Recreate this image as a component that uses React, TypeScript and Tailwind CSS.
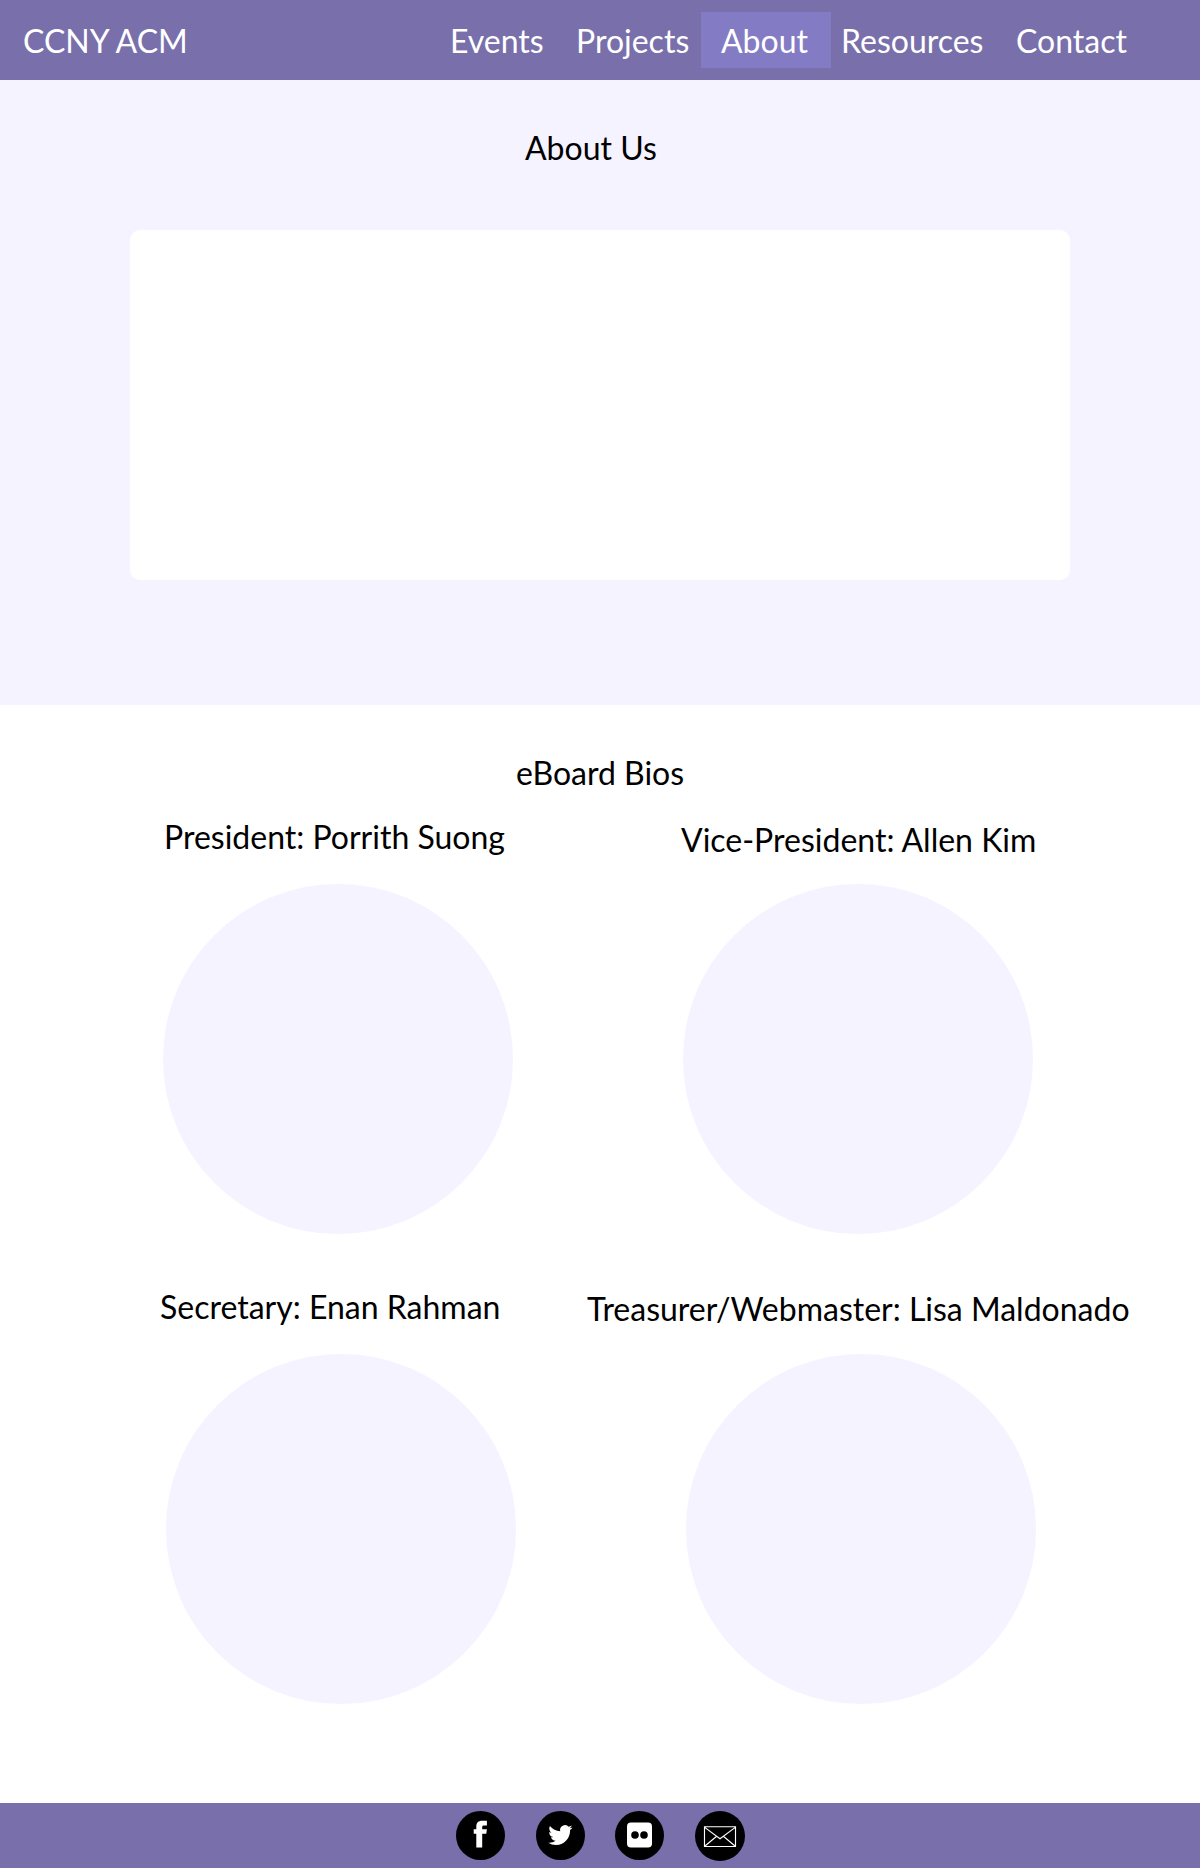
import type { ReactNode } from "react";

const navItems = [
  { label: "Events", box: "w-[126px]" },
  { label: "Projects", box: "w-[125px]" },
  { label: "About", box: "w-[130px] bg-[#847bc5] pl-5" },
  { label: "Resources", box: "w-[185px] pl-[10px]" },
  { label: "Contact", box: "w-[184px]" },
];

function Bio({ title, titleClass, circleClass }: { title: string; titleClass: string; circleClass: string }) {
  return (
    <article className="flex h-[470px] flex-col">
      <h3 className={`h-[67px] whitespace-nowrap ${titleClass}`}>{title}</h3>
      <div className={`size-[350px] shrink-0 rounded-full bg-[#f5f3ff] ${circleClass}`} />
    </article>
  );
}

function SocialLink({ label, className, children }: { label: string; className: string; children: ReactNode }) {
  return (
    <a href="#" aria-label={label} className={`block shrink-0 ${className}`}>
      <svg viewBox="0 0 49 49" className="size-full">
        {children}
      </svg>
    </a>
  );
}

export default function App() {
  return (
    <div className="flex h-[1868px] w-[1200px] flex-col bg-white font-['Lato',sans-serif] text-[32px] leading-10 text-black">
      <header className="flex h-20 shrink-0 items-center justify-between bg-[#786fab] pl-[23px] text-white">
        <div className="whitespace-nowrap pt-px">CCNY ACM</div>
        <nav className="flex">
          {navItems.map((item) => (
            <a key={item.label} href="#" className={`flex h-14 items-center whitespace-nowrap pt-px ${item.box}`}>
              {item.label}
            </a>
          ))}
        </nav>
      </header>

      <section className="flex h-[625px] shrink-0 flex-col bg-[#f5f3ff] px-[130px] pt-12">
        <h2 className="pl-[395px]">About Us</h2>
        <div className="mt-[62px] h-[350px] rounded-[10px] bg-white" />
      </section>

      <main className="flex h-[1098px] shrink-0 flex-col pt-12">
        <h2 className="pl-[516px]">eBoard Bios</h2>
        <div className="mt-6 grid grid-cols-[580px_620px]">
          <Bio title="President: Porrith Suong" titleClass="pl-[164px]" circleClass="ml-[163px]" />
          <Bio title="Vice-President: Allen Kim" titleClass="pl-[101px] pt-[3px]" circleClass="ml-[103px]" />
          <Bio title="Secretary: Enan Rahman" titleClass="pl-[160px]" circleClass="ml-[166px]" />
          <Bio title="Treasurer/Webmaster: Lisa Maldonado" titleClass="pl-[7px] pt-[2px]" circleClass="ml-[106px]" />
        </div>
      </main>

      <footer className="flex h-[65px] shrink-0 items-center bg-[#786fab] pl-[456px]">
        <SocialLink label="Facebook" className="size-[49px]">
          <circle cx="24.5" cy="24.5" r="24.5" fill="#000" />
          <path
            fill="#fff"
            d="M20.3 36.5V22.7h-2.6v-4.4h2.6v-2.7c0-3.8 2-5.9 5.7-5.9h4.9v4.7h-3.1c-1.2 0-1.6.5-1.6 1.6v2.3h4.7l-.6 4.4h-4.1v13.8z"
          />
        </SocialLink>
        <SocialLink label="Twitter" className="ml-[31px] size-[49px]">
          <circle cx="24.5" cy="24.5" r="24.5" fill="#000" />
          <path
            transform="translate(12.3 11.8) scale(1.01 1.02)"
            fill="#fff"
            d="M23.95 4.57a10 10 0 0 1-2.82.77 4.96 4.96 0 0 0 2.16-2.72 9.9 9.9 0 0 1-3.12 1.19 4.92 4.92 0 0 0-8.38 4.48A13.93 13.93 0 0 1 1.64 3.16a4.92 4.92 0 0 0 1.52 6.57 4.9 4.9 0 0 1-2.23-.61v.06a4.92 4.92 0 0 0 3.95 4.83 5 5 0 0 1-2.21.08 4.94 4.94 0 0 0 4.6 3.42A9.87 9.87 0 0 1 0 19.54a14 14 0 0 0 7.55 2.21c9.05 0 14-7.5 14-13.98 0-.21 0-.42-.02-.63a9.94 9.94 0 0 0 2.42-2.57z"
          />
        </SocialLink>
        <SocialLink label="Flickr" className="ml-[30px] size-[49px]">
          <circle cx="24.5" cy="24.5" r="24.5" fill="#000" />
          <rect x="12" y="11.5" width="25" height="25" rx="4" fill="#fff" />
          <circle cx="20" cy="24" r="3.8" fill="#000" />
          <circle cx="29" cy="24" r="3.8" fill="#000" />
        </SocialLink>
        <SocialLink label="Email" className="ml-[31px] size-[50px]">
          <circle cx="24.5" cy="24.5" r="24.5" fill="#000" />
          <path
            fill="none"
            stroke="#fff"
            strokeWidth="1.1"
            d="M9.3 15.4h30.4v19.4H9.3zM9.5 16l15 11.2L39.5 16M9.5 34.5l11.7-9.7M39.5 34.5l-11.7-9.7"
          />
        </SocialLink>
      </footer>
    </div>
  );
}
